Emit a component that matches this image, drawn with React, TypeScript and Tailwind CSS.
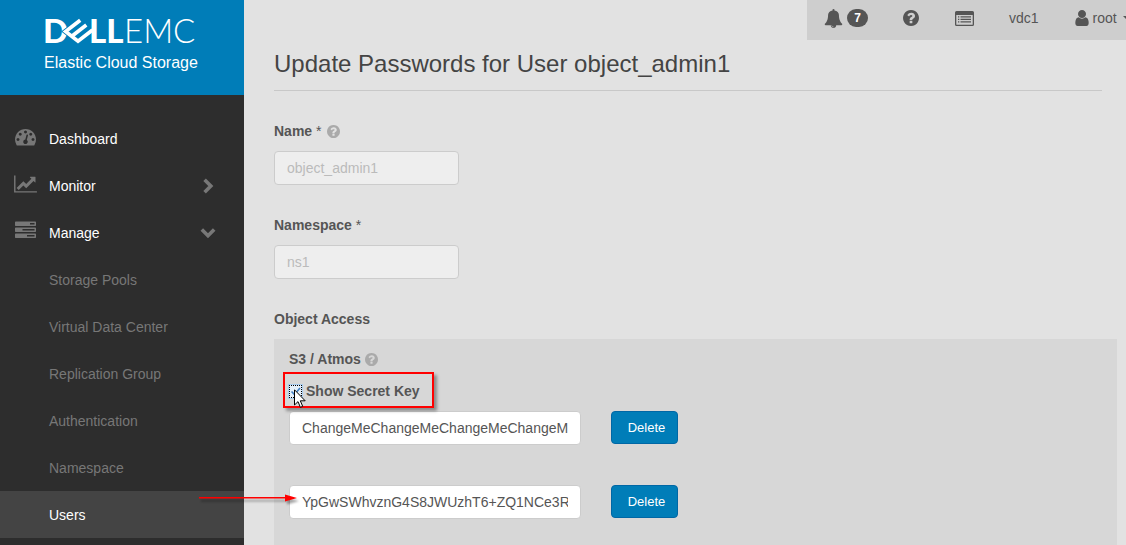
import type { ReactNode } from "react";

type IconProps = { className?: string };

function DashboardIcon({ className }: IconProps) {
  return (
    <svg viewBox="0 0 1792 1792" fill="currentColor" className={className} aria-hidden="true">
      <path d="M384 1152q0-53-37.5-90.5t-90.5-37.5-90.5 37.5-37.5 90.5 37.5 90.5 90.5 37.5 90.5-37.5 37.5-90.5zm192-448q0-53-37.5-90.5t-90.5-37.5-90.5 37.5-37.5 90.5 37.5 90.5 90.5 37.5 90.5-37.5 37.5-90.5zm428 481l101-382q6-26-7.5-48.5t-38.5-29.5-48 6.5-30 39.5l-101 382q-60 5-107 43.5t-63 98.5q-20 77 20 146t117 89 146-20 89-117q16-60-6-117t-72-91zm660-33q0-53-37.5-90.5t-90.5-37.5-90.5 37.5-37.5 90.5 37.5 90.5 90.5 37.5 90.5-37.5 37.5-90.5zm-640-640q0-53-37.5-90.5t-90.5-37.5-90.5 37.5-37.5 90.5 37.5 90.5 90.5 37.5 90.5-37.5 37.5-90.5zm448 192q0-53-37.5-90.5t-90.5-37.5-90.5 37.5-37.5 90.5 37.5 90.5 90.5 37.5 90.5-37.5 37.5-90.5zm320 448q0 261-141 483-19 29-54 29h-1402q-35 0-54-29-141-221-141-483 0-182 71-348t191-286 286-191 348-71 348 71 286 191 191 286 71 348z" />
    </svg>
  );
}

function ChartIcon({ className }: IconProps) {
  return (
    <svg viewBox="0 0 2048 1792" fill="currentColor" className={className} aria-hidden="true">
      <path d="M2048 1536v128h-2048v-1536h128v1408h1920zm-128-1248v435q0 21-19.5 29.5t-35.5-7.5l-121-121-633 633q-10 10-23 10t-23-10l-233-233-416 416-192-192 585-585q10-10 23-10t23 10l233 233 464-464-121-121q-16-16-7.5-35.5t29.5-19.5h435q14 0 23 9t9 23z" />
    </svg>
  );
}

function TasksIcon({ className }: IconProps) {
  return (
    <svg viewBox="0 0 1792 1792" fill="currentColor" className={className} aria-hidden="true">
      <path d="M1024 1408h640v-128h-640v128zm-384-512h1024v-128h-1024v128zm640-512h384v-128h-384v128zm512 832v256q0 26-19 45t-45 19h-1664q-26 0-45-19t-19-45v-256q0-26 19-45t45-19h1664q26 0 45 19t19 45zm0-512v256q0 26-19 45t-45 19h-1664q-26 0-45-19t-19-45v-256q0-26 19-45t45-19h1664q26 0 45 19t19 45zm0-512v256q0 26-19 45t-45 19h-1664q-26 0-45-19t-19-45v-256q0-26 19-45t45-19h1664q26 0 45 19t19 45z" />
    </svg>
  );
}

function BellIcon({ className }: IconProps) {
  return (
    <svg viewBox="0 0 1792 1792" fill="currentColor" className={className} aria-hidden="true">
      <path d="M912 1696q0-16-16-16-59 0-101.5-42.5t-42.5-101.5q0-16-16-16t-16 16q0 73 51.5 124.5t124.5 51.5q16 0 16-16zm816-288q0 52-38 90t-90 38h-448q0 106-75 181t-181 75-181-75-75-181h-448q-52 0-90-38t-38-90q50-42 91-88t85-119.5 74.5-158.5 50-206 19.5-260q0-152 117-282.5t307-158.5q-8-19-8-39 0-40 28-68t68-28 68 28 28 68q0 20-8 39 190 28 307 158.5t117 282.5q0 139 19.5 260t50 206 74.5 158.5 85 119.5 91 88z" />
    </svg>
  );
}

function HelpIcon({ className }: IconProps) {
  return (
    <svg viewBox="128 128 1536 1536" fill="currentColor" className={className} aria-hidden="true">
      <path d="M1024 1376v-192q0-14-9-23t-23-9h-192q-14 0-23 9t-9 23v192q0 14 9 23t23 9h192q14 0 23-9t9-23zm256-672q0-88-55.5-163t-138.5-116-170-41q-243 0-371 213-15 24 8 42l132 100q7 6 19 6 16 0 25-12 53-68 86-92 34-24 86-24 48 0 85.5 26t37.5 59q0 38-20 61t-68 45q-63 28-115.5 86.5t-52.5 125.5v36q0 14 9 23t23 9h192q14 0 23-9t9-23q0-19 21.5-49.5t54.5-49.5q32-18 49-28.5t46-35 44.5-48 28-60.5 12.5-81zm384 192q0 209-103 385.5t-279.5 279.5-385.5 103-385.5-103-279.5-279.5-103-385.5 103-385.5 279.5-279.5 385.5-103 385.5 103 279.5 279.5 103 385.5z" />
    </svg>
  );
}

function UserIcon({ className }: IconProps) {
  return (
    <svg viewBox="256 128 1280 1536" fill="currentColor" className={className} aria-hidden="true">
      <path d="M1536 1399q0 109-62.5 187t-150.5 78h-854q-88 0-150.5-78t-62.5-187q0-85 8.5-160.5t31.5-152 58.5-131 94-89 134.5-34.5q131 128 313 128t313-128q76 0 134.5 34.5t94 89 58.5 131 31.5 152 8.5 160.5zm-256-887q0 159-112.5 271.5t-271.5 112.5-271.5-112.5-112.5-271.5 112.5-271.5 271.5-112.5 271.5 112.5 112.5 271.5z" />
    </svg>
  );
}

function ListIcon({ className }: IconProps) {
  return (
    <svg viewBox="0 0 19 15" fill="currentColor" className={className} aria-hidden="true">
      <path
        fillRule="evenodd"
        d="M1.5 0h16a1.5 1.5 0 0 1 1.5 1.5v12a1.5 1.5 0 0 1-1.5 1.5h-16a1.5 1.5 0 0 1-1.5-1.5v-12a1.5 1.5 0 0 1 1.5-1.5zM1.3 4v9.2q0 .5.5.5h15.4q.5 0 .5-.5V4z"
      />
      <path d="M3 5.3h1.3v1.2H3zM5.5 5.3H16v1.2H5.5zM3 7.8h1.3V9H3zM5.5 7.8H16V9H5.5zM3 10.3h1.3v1.2H3zM5.5 10.3H16v1.2H5.5z" />
    </svg>
  );
}

function Chevron({ className }: IconProps) {
  return (
    <svg viewBox="0 0 16 16" fill="none" stroke="currentColor" strokeWidth="3.6" className={className} aria-hidden="true">
      <path d="M4.6 1.8L10.8 8l-6.2 6.2" />
    </svg>
  );
}

function Logo() {
  const tiltedMark = "M80.200 20.200L65.600 31.500L78 41.200L92.500 30M71.800 36.300L86.300 25";
  return (
    <svg viewBox="40 9 160 44" fill="#fff" className="h-11 w-40" role="img" aria-label="Dell EMC">
      <g fontFamily="Lato, sans-serif" fontSize="33">
        <text x="43" y="43" fontWeight="900">D</text>
        <path d={tiltedMark} fill="none" stroke="#007db8" strokeWidth="5.400" />
        <path d={tiltedMark} fill="none" stroke="#fff" strokeWidth="3.700" />
        <text x="89" y="43" fontWeight="900">LL</text>
        <text x="124" y="43" fontWeight="300">EMC</text>
      </g>
    </svg>
  );
}

const navRow = "flex h-[47px] w-full items-center text-left";

function NavGroup({ icon, label, chevron }: { icon: ReactNode; label: string; chevron: string }) {
  return (
    <button type="button" className={`${navRow} pr-7 pl-3 text-white`}>
      <span className="flex w-[37px] items-center pb-1 text-[#777]">{icon}</span>
      <span className="flex-1">{label}</span>
      <Chevron className={chevron} />
    </button>
  );
}

const subItems = ["Storage Pools", "Virtual Data Center", "Replication Group", "Authentication", "Namespace"];

function Sidebar() {
  return (
    <aside className="w-[244px] shrink-0 bg-[#2d2d2d]">
      <div className="flex h-[95px] flex-col items-start bg-[#007db8] pt-[9px] pl-10 text-white">
        <Logo />
        <p className="pl-1 text-base leading-5">Elastic Cloud Storage</p>
      </div>
      <nav className="pt-5">
        <a href="#dashboard" className={`${navRow} pl-3 text-white`}>
          <span className="flex w-[37px] items-center pb-1 pl-[3px] text-[#777]">
            <DashboardIcon className="size-[21px]" />
          </span>
          Dashboard
        </a>
        <NavGroup icon={<ChartIcon className="ml-[2px] h-5 w-[23px]" />} label="Monitor" chevron="size-4 text-[#777]" />
        <NavGroup icon={<TasksIcon className="ml-[3px] size-[21px]" />} label="Manage" chevron="size-4 rotate-90 text-[#777]" />
        {subItems.map((item) => (
          <a key={item} href="#manage" className={`${navRow} pl-[49px] text-[#777]`}>
            {item}
          </a>
        ))}
        <a href="#users" aria-current="page" className={`${navRow} bg-[#444] pl-[49px] text-white`}>
          Users
        </a>
      </nav>
    </aside>
  );
}

function TopBar() {
  return (
    <header className="flex h-10 w-[319px] items-center self-end overflow-hidden bg-[#cecece] pb-1 pl-[17px] whitespace-nowrap text-[#555]">
      <button type="button" aria-label="Notifications" className="flex items-center gap-1">
        <BellIcon className="size-[19px]" />
        <span className="flex h-[18px] w-[21px] items-center justify-center rounded-full bg-[#555] text-xs font-bold text-white">
          7
        </span>
      </button>
      <button type="button" aria-label="Help" className="ml-[35px]">
        <HelpIcon className="size-4" />
      </button>
      <button type="button" aria-label="Activity" className="ml-9">
        <ListIcon className="h-[15px] w-[19px]" />
      </button>
      <span className="ml-[35px]">vdc1</span>
      <button type="button" className="ml-9 flex items-center gap-1">
        <UserIcon className="h-4 w-[14px]" />
        root
        <svg viewBox="0 0 8 4" className="ml-[2px] h-1 w-2 shrink-0" fill="currentColor" aria-hidden="true">
          <path d="M0 0h8L4 4z" />
        </svg>
      </button>
    </header>
  );
}

function DisabledField({ id, label, value, help }: { id: string; label: string; value: string; help?: boolean }) {
  return (
    <div className="mb-[30px]">
      <div className="mb-[10px] flex h-5 items-center gap-[6px]">
        <label htmlFor={id} className="font-bold">
          {label} <span className="font-normal">*</span>
        </label>
        {help && <HelpIcon className="size-[13px] text-[#aaa]" />}
      </div>
      <input
        id={id}
        disabled
        defaultValue={value}
        className="block h-[34px] w-[185px] rounded border border-[#ccc] bg-[#eee] px-3 text-[#bbb]"
      />
    </div>
  );
}

function KeyRow({ id, value }: { id: string; value: string }) {
  return (
    <div className="flex items-start gap-[30px]">
      <input
        id={id}
        aria-label="Secret key"
        defaultValue={value}
        className="h-[34px] w-[292px] rounded border border-[#ccc] bg-white px-3 text-[#555]"
      />
      <button
        type="button"
        className="h-[33px] w-[67px] rounded border border-[#0067a5] bg-[#007db8] pl-1 text-[13px] text-white"
      >
        Delete
      </button>
    </div>
  );
}

function SecretKeyToggle() {
  return (
    <div className="relative mt-[2px] flex h-10 items-center">
      <label className="flex items-center gap-1 font-bold">
        <input type="checkbox" defaultChecked className="peer sr-only" />
        <span className="flex size-[13px] items-center justify-center border border-dotted border-black bg-[#e4effa] outline-1 outline-[#a9cdf0]">
          <svg viewBox="0 0 11 11" className="size-[11px]" fill="none" stroke="#3d7fc4" strokeWidth="1.600" aria-hidden="true">
            <path d="M1.500 5.500L4.500 8.500L10 2" />
          </svg>
        </span>
        Show Secret Key
      </label>
      <div className="pointer-events-none absolute top-px -left-[6px] h-9 w-[151px] border-2 border-[#f00] shadow-[3px_3px_3px_rgba(0,0,0,0.35)]" />
      <svg viewBox="0 0 12 19" className="pointer-events-none absolute top-[18px] left-[5px] h-[19px] w-3" aria-hidden="true">
        <path d="M.5.800v15.200l3.500-3.400 2.400 5.700 2.300-1-2.400-5.500h4.900z" fill="#fff" stroke="#000" />
      </svg>
    </div>
  );
}

function ArrowCallout() {
  return (
    <svg
      viewBox="0 0 100 14"
      className="pointer-events-none absolute top-[6px] -left-[90px] h-[14px] w-[100px] drop-shadow-[2px_3px_1px_rgba(0,0,0,0.35)]"
      fill="#f00"
      aria-hidden="true"
    >
      <path d="M0 6h86V3.500l12 3.500-12 3.500V7.500H0z" />
    </svg>
  );
}

export default function App() {
  return (
    <div className="flex min-h-screen overflow-hidden bg-[#e2e2e2] font-['Liberation_Sans',Arial,sans-serif] text-sm leading-5 text-[#555]">
      <Sidebar />
      <main className="flex min-w-0 flex-1 flex-col">
        <TopBar />
        <h1 className="mr-6 ml-[30px] border-b border-[#c8c8c8] pt-2 pb-[10px] text-2xl leading-8 text-[#444]">
          Update Passwords for User object_admin1
        </h1>
        <form className="mt-[30px] mr-[9px] ml-[30px] flex flex-1 flex-col" onSubmit={(e) => e.preventDefault()}>
          <DisabledField id="name" label="Name" value="object_admin1" help />
          <DisabledField id="namespace" label="Namespace" value="ns1" />
          <h2 className="mb-[10px] font-bold">Object Access</h2>
          <section className="flex-1 bg-[#d7d7d7] pt-[10px] pl-[15px]">
            <h3 className="flex h-5 items-center gap-1 font-bold">
              S3 / Atmos
              <HelpIcon className="size-[13px] text-[#aaa]" />
            </h3>
            <SecretKeyToggle />
            <KeyRow id="key-1" value="ChangeMeChangeMeChangeMeChangeMe" />
            <div className="relative mt-10">
              <KeyRow id="key-2" value="YpGwSWhvznG4S8JWUzhT6+ZQ1NCe3RA" />
              <ArrowCallout />
            </div>
          </section>
        </form>
      </main>
    </div>
  );
}
